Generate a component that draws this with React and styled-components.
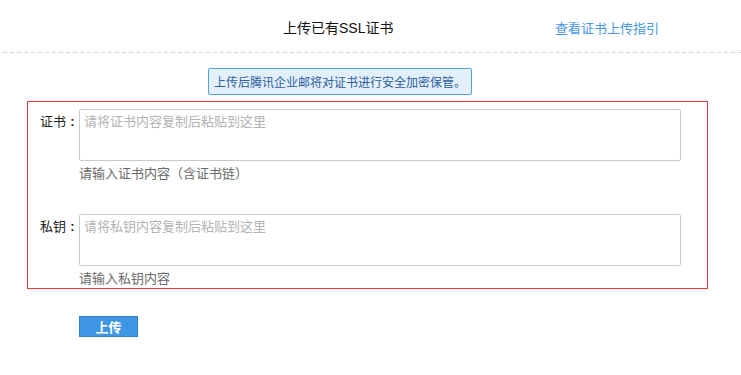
import React from "react";
import styled, { createGlobalStyle } from "styled-components";

const Global = createGlobalStyle`
  html, body { margin: 0; padding: 0; background: #fff; }
  body { font-family: "Liberation Sans", "Noto Sans CJK SC", sans-serif; }
  * { box-sizing: border-box; }
`;

const Page = styled.div`
  width: 741px;
  height: 375px;
  overflow: hidden;
  background: #fff;
`;

const Header = styled.div`
  display: flex;
  align-items: center;
  height: 52px;
  padding: 2px 82px 0 283px;
`;

const Title = styled.div`
  font-size: 14px;
  color: #111;
`;

const GuideLink = styled.a`
  margin-left: auto;
  font-size: 13px;
  color: #4a97e6;
  text-decoration: none;
  cursor: pointer;
`;

const Divider = styled.div`
  height: 1px;
  margin-left: 3px;
  background: repeating-linear-gradient(90deg, #d4d4d4 0 4px, transparent 4px 7px);
`;

const TipRow = styled.div`
  display: flex;
  padding: 15px 0 0 208px;
`;

const Tip = styled.div`
  height: 27px;
  padding: 0 5px;
  display: flex;
  align-items: center;
  font-size: 12px;
  color: #2c5d9c;
  background: #e3effb;
  border: 1px solid #4ea2de;
  border-radius: 2px;
`;

const FormBox = styled.div`
  margin: 6px 33px 0 27px;
  border: 1px solid #e8383d;
  padding: 7px 0 0;
  display: grid;
  grid-template-columns: 51px 602px;
`;

const Label = styled.div`
  padding-top: 4px;
  font-size: 13px;
  line-height: 18px;
  color: #222;
  text-align: right;
  white-space: nowrap;
`;

const Colon = styled.span`
  display: inline-block;
  width: 13px;
  text-align: center;
  font-family: "Liberation Sans", sans-serif;
  font-weight: bold;
`;

const Field = styled.div`
  display: flex;
  flex-direction: column;
  padding-bottom: ${(p) => p.$pb}px;
`;

const Area = styled.textarea`
  display: block;
  width: 602px;
  height: 52px;
  margin: 0;
  padding: 3px 4px;
  resize: none;
  font-family: "Liberation Sans", "Noto Sans CJK SC", sans-serif;
  font-size: 13px;
  line-height: 18px;
  color: #333;
  border: 1px solid #c9c9c9;
  border-radius: 2px;
  outline: none;
  &::placeholder { color: #b3b3b3; }
`;

const Hint = styled.div`
  margin-top: 4px;
  font-size: 13px;
  line-height: 18px;
  color: #6a6a6a;
`;

const Actions = styled.div`
  padding: 27px 0 0 79px;
`;

const UploadButton = styled.button`
  width: 59px;
  height: 21px;
  padding: 0;
  font-family: "Liberation Sans", "Noto Sans CJK SC", sans-serif;
  font-size: 13px;
  font-weight: bold;
  color: #fff;
  background: #3e96e5;
  border: 1px solid #2c80d3;
  border-radius: 0;
  cursor: pointer;
`;

export default function App() {
  return (
    <Page>
      <Global />
      <Header>
        <Title>上传已有SSL证书</Title>
        <GuideLink>查看证书上传指引</GuideLink>
      </Header>
      <Divider />
      <TipRow>
        <Tip>上传后腾讯企业邮将对证书进行安全加密保管。</Tip>
      </TipRow>
      <FormBox>
        <Label>证书<Colon>:</Colon></Label>
        <Field $pb={31}>
          <Area placeholder="请将证书内容复制后粘贴到这里" />
          <Hint>请输入证书内容（含证书链）</Hint>
        </Field>
        <Label>私钥<Colon>:</Colon></Label>
        <Field $pb={0}>
          <Area placeholder="请将私钥内容复制后粘贴到这里" />
          <Hint>请输入私钥内容</Hint>
        </Field>
      </FormBox>
      <Actions>
        <UploadButton>上传</UploadButton>
      </Actions>
    </Page>
  );
}
